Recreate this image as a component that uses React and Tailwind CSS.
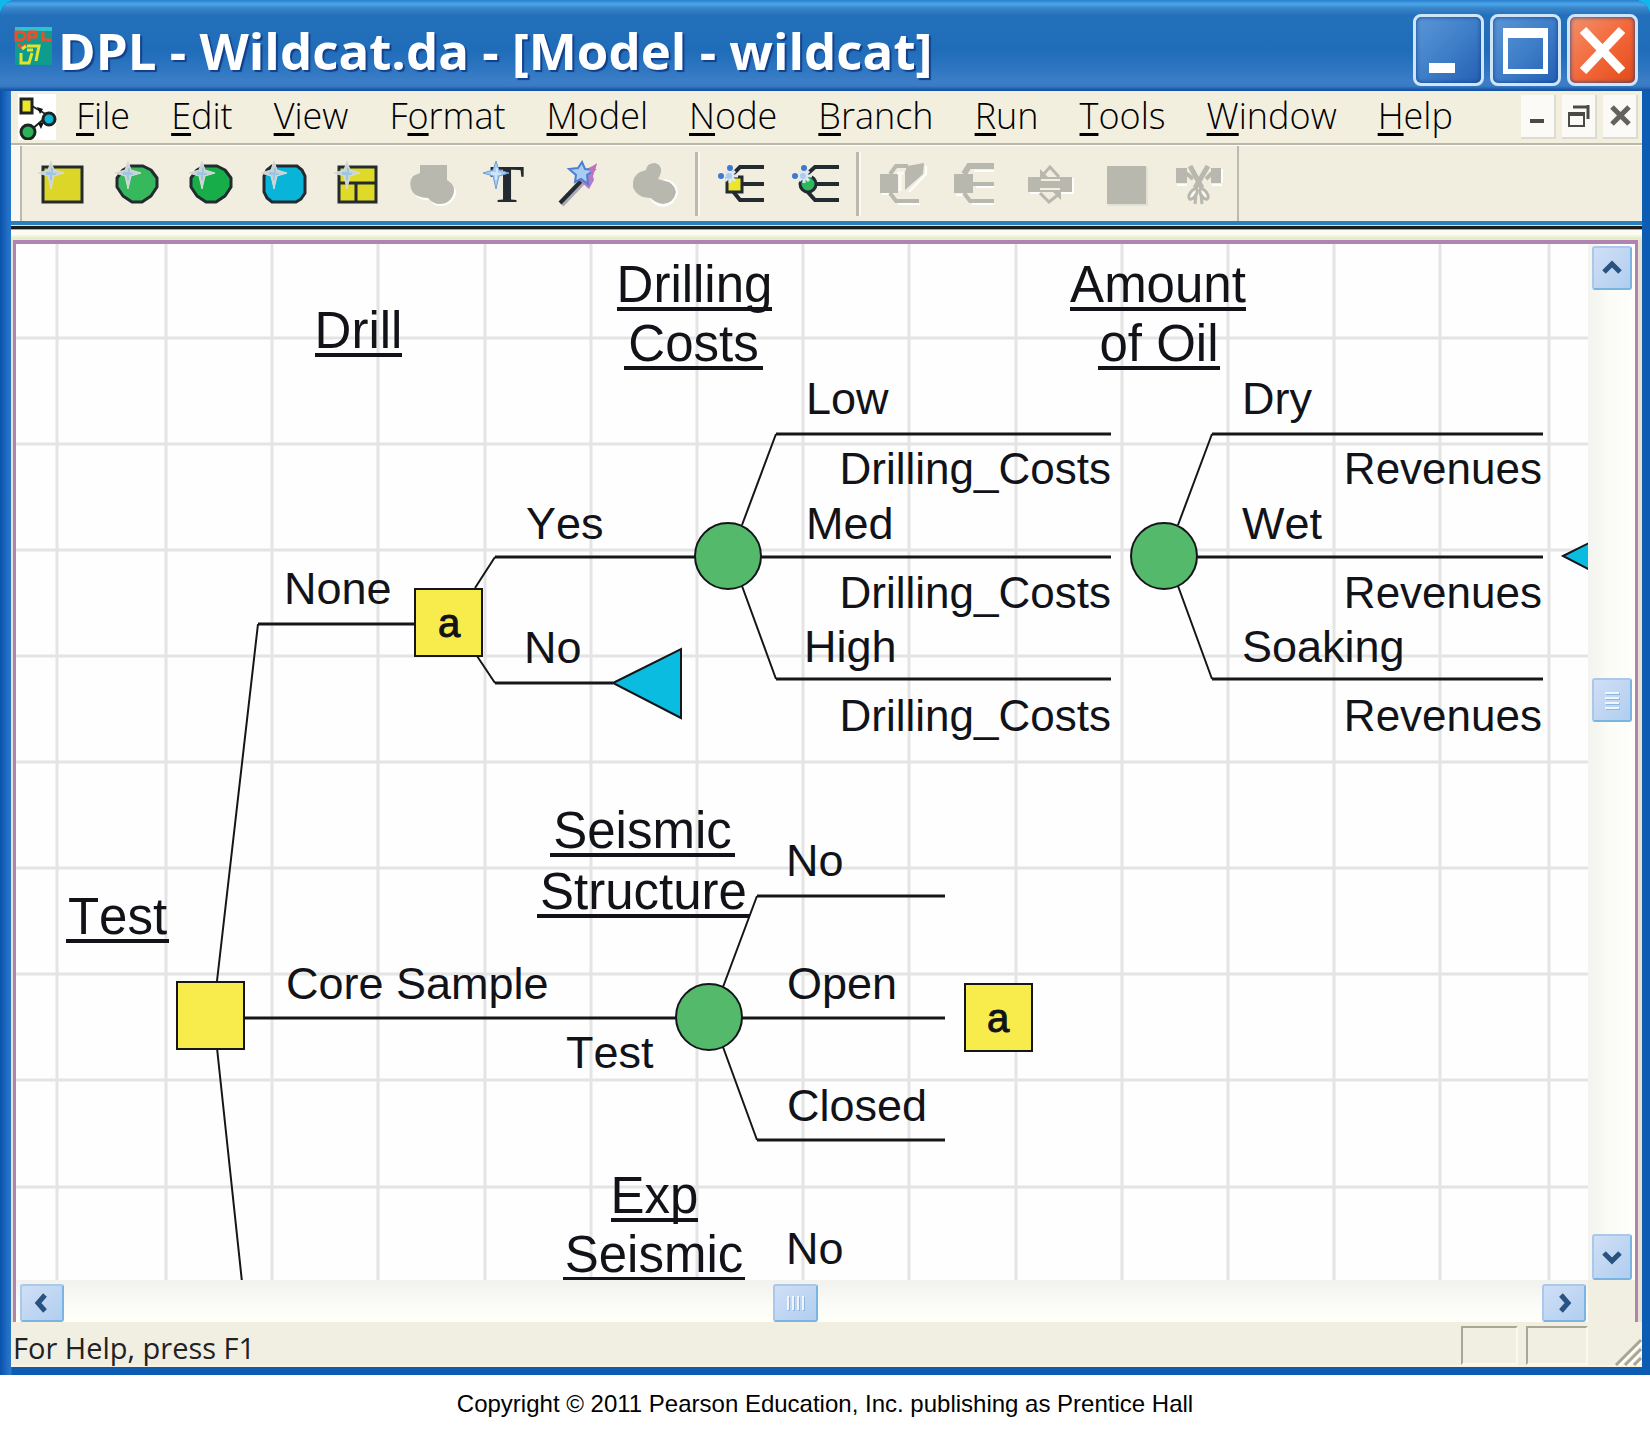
import React from "react";

const UI = "font-['Open_Sans','Noto_Sans',sans-serif]";
const ARIAL = "font-['Liberation_Sans',Arial,sans-serif]";

/* ---------- title bar ---------- */

function AppIcon() {
  return (
    <svg width="40" height="40" viewBox="0 0 40 40" aria-hidden="true" className="shrink-0">
      <rect x="1" y="1" width="37" height="38" fill="#0f9c8e" />
      <rect x="1" y="1" width="37" height="4" fill="#2cc4c8" />
      <g fill="none" stroke="#e8502c" strokeWidth="3">
        <path d="M2 6h6l3 2v4l-3 2H2z M15 15V6h7v5h-7 M29 5v9h8" />
        <path d="M4 18l4 4 4-4" />
      </g>
      <g fill="none" stroke="#e3e32c" strokeWidth="3">
        <path d="M13 20h12l-3 15 M12 20l-4 3 M7 27v10h8l3-10 M13 24h6" />
      </g>
    </svg>
  );
}

function CaptionButton({ label, close, children }) {
  const tone = close
    ? "bg-linear-to-br from-[#f0906a] via-[#f4683a] to-[#e04a18]"
    : "bg-linear-to-br from-[#5b96d6] via-[#3f7ec8] to-[#2460b4]";
  return (
    <button
      type="button"
      aria-label={label}
      className={"h-[72px] w-[71px] rounded-lg border-[3px] border-[#cfe6fa] shadow-[inset_0_0_4px_#123f8a] " + tone}
    >
      <svg width="65" height="66" viewBox="0 0 65 66" aria-hidden="true">
        {children}
      </svg>
    </button>
  );
}

function TitleBar() {
  return (
    <header className="flex h-[91px] shrink-0 items-center gap-1 bg-[linear-gradient(180deg,#2a80cc_0px,#4aa6ea_4px,#3a86ca_8px,#2470bb_15px,#1f6cb8_50px,#2b74c0_66px,#3b7dc6_80px,#3a7cc4_86px,#1554a6_90px)] pr-3 pl-[14px]">
      <AppIcon />
      <h1 className={"min-w-0 flex-1 truncate pt-2 text-[51px] leading-[72px] font-bold text-white [text-shadow:2px_2px_1px_#123f8a] " + UI}>
        DPL - Wildcat.da - [Model - wildcat]
      </h1>
      <div className="flex gap-[6px] pt-2">
        <CaptionButton label="Minimize">
          <rect x="13" y="46" width="26" height="10" fill="#fff" />
        </CaptionButton>
        <CaptionButton label="Maximize">
          <path fillRule="evenodd" fill="#fff" d="M10 11h45v46H10z M15 21v31h35V21z" />
        </CaptionButton>
        <CaptionButton label="Close" close>
          <path d="M13 13l39 41M52 13L13 54" stroke="#fff" strokeWidth="9" />
        </CaptionButton>
      </div>
    </header>
  );
}

/* ---------- menu bar ---------- */

const MENUS = [
  ["", "F", "ile"],
  ["", "E", "dit"],
  ["", "V", "iew"],
  ["F", "o", "rmat"],
  ["", "M", "odel"],
  ["", "N", "ode"],
  ["", "B", "ranch"],
  ["", "R", "un"],
  ["", "T", "ools"],
  ["", "W", "indow"],
  ["", "H", "elp"],
];

function MdiButton({ label, children }) {
  return (
    <button type="button" aria-label={label} className="h-11 w-[35px] border-r-2 border-b-2 border-[#dedbd0] bg-[#fbfaf6]">
      <svg width="33" height="42" viewBox="0 0 33 42" aria-hidden="true" fill="none" stroke="#4a4a46">
        {children}
      </svg>
    </button>
  );
}

function MenuBar() {
  return (
    <div className="flex h-[52px] shrink-0 items-center bg-[#f2efdf] pr-1 pl-[7px]">
      <svg width="40" height="46" viewBox="0 0 40 46" aria-hidden="true" className="shrink-0">
        <rect width="38" height="46" fill="#fff" />
        <path d="M14 12l17 10M12 37l16-14" stroke="#1c2420" strokeWidth="2" />
        <path d="M19 13l6 2-3 5zM20 29l6-1-3 7z" fill="#111" />
        <rect x="3" y="5" width="11" height="14" fill="#ece52c" stroke="#1c2420" strokeWidth="3" />
        <circle cx="31" cy="25" r="6" fill="#12b4dc" stroke="#1c2420" strokeWidth="3" />
        <circle cx="10" cy="38" r="7" fill="#2cb35a" stroke="#1c2420" strokeWidth="3" />
      </svg>
      <nav aria-label="Main menu" className="flex min-w-0 flex-1 gap-[41px] pl-[18px]">
        {MENUS.map(([before, key, after]) => (
          <button
            key={before + key + after}
            type="button"
            className={"pb-[2px] text-[36px] leading-[44px] font-light whitespace-nowrap text-black " + UI}
          >
            {before}
            <span className="underline decoration-3 underline-offset-[4px] [text-decoration-skip-ink:none]">{key}</span>
            {after}
          </button>
        ))}
      </nav>
      <div className="flex gap-[6px]">
        <MdiButton label="Minimize document">
          <path d="M9 26h14" strokeWidth="4" />
        </MdiButton>
        <MdiButton label="Restore document">
          <path d="M7 20h15v11H7z" strokeWidth="2" />
          <path d="M6 19h17" strokeWidth="4" />
          <path d="M11 12h16M26 10v14" strokeWidth="3" />
        </MdiButton>
        <MdiButton label="Close document">
          <path d="M9 12l17 17M26 12L9 29" strokeWidth="5" stroke="#62625e" />
        </MdiButton>
      </div>
    </div>
  );
}

/* ---------- toolbar ---------- */

const INK = "#232a30";
const GREY = "#b9b8ae";

function Sparkle({ x = 14, y = 13, blue }) {
  return (
    <g transform={`translate(${x} ${y})`}>
      <path
        d="M0-12L3-3L13 0L3 3L0 16L-3 3L-13 0L-3-3Z"
        fill={blue ? "#a9cdf0" : "#c9d2d8"}
        stroke={blue ? "#6f9edb" : "#d9dcd6"}
        strokeWidth="1"
      />
      <path d="M-5-1h5v-4h2v5h3v2h-4v5h-2v-5h-4z" fill={blue ? "#cfe6fa" : "#9cc7e2"} />
    </g>
  );
}

function BlueDots() {
  return (
    <g>
      <path d="M13 9v14M6 16h15M8 11l10 10M18 11L8 21" stroke="#dfe7ef" strokeWidth="3" />
      <circle cx="13" cy="8" r="3" fill="#3f78cc" />
      <circle cx="4" cy="16" r="3" fill="#3f78cc" />
      <circle cx="12" cy="16" r="3" fill="#a9cdf0" />
    </g>
  );
}

const ICONS = {
  "New decision node": (
    <>
      <rect x="5" y="7" width="39" height="35" fill="#dcd628" stroke={INK} strokeWidth="3" />
      <Sparkle x={13} />
    </>
  ),
  "New chance node": (
    <>
      <path d="M18 6h13l8 4 6 8v9l-6 9-9 6H20l-9-6-6-9v-9l6-8z" fill="#36b85c" stroke={INK} strokeWidth="3" strokeLinejoin="round" />
      <Sparkle x={16} />
    </>
  ),
  "New controlled node": (
    <>
      <path d="M18 6h13l8 4 6 8v9l-6 9-9 6H20l-9-6-6-9v-9l6-8z" fill="#17ae4a" stroke={INK} strokeWidth="3" strokeLinejoin="round" />
      <Sparkle x={16} />
    </>
  ),
  "New value node": (
    <>
      <path d="M12 6h25l5 4 3 6v17l-4 6-5 3H12l-5-4-3-6V16l3-6z" fill="#08b4d8" stroke={INK} strokeWidth="3" />
      <Sparkle x={14} />
    </>
  ),
  "New strategy table": (
    <>
      <rect x="5" y="7" width="37" height="35" fill="#dfda28" stroke={INK} strokeWidth="3" />
      <path d="M5 23h37M22 23v19" stroke={INK} strokeWidth="3" />
      <Sparkle x={13} />
    </>
  ),
  "Combine nodes": (
    <>
      <path d="M42 24q7 4 6 10-4 12-16 12-6 0-10-6-10 1-15-5z" fill="#fff" />
      <path d="M12 5h27v15q8 5 7 12-3 12-14 12-7 0-12-6-12 0-16-7-4-8 1-15l7-3z" fill={GREY} />
    </>
  ),
  "New text": (
    <>
      <text x="25" y="42" textAnchor="middle" fill={INK} className="font-['Liberation_Serif',serif] text-[52px] font-bold">
        T
      </text>
      <Sparkle x={14} y={13} blue />
    </>
  ),
  "Wizard": (
    <>
      <path d="M6 45L28 22" stroke="#a9a8b4" strokeWidth="4" />
      <path d="M4 43L27 19" stroke={INK} strokeWidth="4" />
      <path d="M28 10l13-6-4 12 1 4-5 9-10-9z" fill="#b57ac8" />
      <path d="M26 2l3 7 9 1-7 5 1 9-7-5-6 3 1-7-7-6 9-1z" fill="#a9cdf0" stroke="#4d7fd0" strokeWidth="2" />
      <path d="M33 9l8-6-4 12z" fill="#c474b4" />
    </>
  ),
  "Group nodes": (
    <>
      <path d="M35 19q12 2 13 14-3 12-14 14-8 0-13-7z" fill="#fff" />
      <path d="M16 10q1-7 9-7 7 2 6 9-1 4-3 7 6 2 11 3 6 4 7 10-2 11-13 12-8-1-12-6-14 0-18-11-1-11 7-15z" fill={GREY} />
    </>
  ),
  "Add decision branches": (
    <>
      <path d="M15 15L23 7h24M20 24h27M15 30l8 10h24" fill="none" stroke={INK} strokeWidth="4" />
      <rect x="10" y="17" width="15" height="15" fill="#ece52c" stroke={INK} strokeWidth="3" />
      <BlueDots />
    </>
  ),
  "Add chance branches": (
    <>
      <path d="M15 15L24 7h24M20 24h28M15 30l9 10h24" fill="none" stroke={INK} strokeWidth="4" />
      <circle cx="17" cy="24" r="8" fill="#2cb85c" stroke={INK} strokeWidth="3" />
      <BlueDots />
    </>
  ),
  "Edit branch": (
    <>
      <path d="M4 34h7M20 44h22M48 6v8L31 32" fill="none" stroke="#fff" strokeWidth="2" />
      <rect x="2" y="14" width="18" height="19" fill={GREY} />
      <path d="M12 14l6-8h12M12 33l6 8h23" fill="none" stroke={GREY} strokeWidth="4" />
      <path d="M29 6l17-3-1 11-18 16V12z" fill={GREY} />
      <path d="M19 13h7M22 13v18" stroke="#fbfaf4" strokeWidth="3" />
    </>
  ),
  "Move branch": (
    <>
      <path d="M4 35h7M22 11h20M24 27h18M20 44h22" fill="none" stroke="#fff" strokeWidth="2" />
      <rect x="2" y="14" width="19" height="19" fill={GREY} />
      <path d="M12 14l5-8h25" fill="none" stroke={GREY} strokeWidth="6" />
      <path d="M12 33l6 8h24M20 24h22" fill="none" stroke={GREY} strokeWidth="4" />
    </>
  ),
  "Swap nodes": (
    <>
      <path d="M4 33h11M35 33h12V18" fill="none" stroke="#fff" strokeWidth="2" />
      <rect x="2" y="17" width="44" height="15" fill={GREY} />
      <path d="M15 20h19M14 29h20" stroke="#f2efdf" strokeWidth="2" />
      <path d="M14 9v9h9zM35 40v-9h-9z" fill={GREY} />
      <path d="M16 16l8-9 9 10M14 33l9 9 10-8" fill="none" stroke={GREY} strokeWidth="3" />
    </>
  ),
  "Block": (
    <>
      <rect x="8" y="7" width="40" height="39" fill="#e2e1d8" />
      <rect x="7" y="6" width="39" height="38" fill={GREY} />
    </>
  ),
  "Cut": (
    <>
      <path d="M3 25h10M38 25h10M48 9v14" fill="none" stroke="#fff" strokeWidth="2" />
      <rect x="2" y="8" width="11" height="15" fill={GREY} />
      <rect x="37" y="8" width="10" height="15" fill={GREY} />
      <path d="M12 13l7 6M38 13l-6 6" stroke={GREY} strokeWidth="4" />
      <path d="M16 6l12 22M34 6L21 28" stroke={GREY} strokeWidth="5" />
      <ellipse cx="19" cy="34" rx="3" ry="6" transform="rotate(35 19 34)" fill="#fbfaf4" stroke={GREY} strokeWidth="3" />
      <ellipse cx="30" cy="34" rx="3" ry="6" transform="rotate(-35 30 34)" fill="#fbfaf4" stroke={GREY} strokeWidth="3" />
      <path d="M22 34l-1 10M27 34l1 10" stroke={GREY} strokeWidth="3" />
    </>
  ),
};

const GROUPS = [
  ["New decision node", "New chance node", "New controlled node", "New value node", "New strategy table", "Combine nodes", "New text", "Wizard", "Group nodes"],
  ["Add decision branches", "Add chance branches"],
  ["Edit branch", "Move branch", "Swap nodes", "Block", "Cut"],
];

function Toolbar() {
  return (
    <div role="toolbar" aria-label="Model tools" className="flex h-[75px] shrink-0 items-stretch overflow-hidden bg-[#f1eee0]">
      <div className="mr-[3px] w-[11px] shrink-0 border-r-2 border-[#bdb9ae] bg-[#faf8f2]" />
      {GROUPS.map((group, i) => (
        <div key={group[0]} className="flex items-center">
          {group.map((name) => (
            <button key={name} type="button" aria-label={name} className="flex w-[74px] justify-center">
              <svg width="48" height="48" viewBox="0 0 48 48" aria-hidden="true" className="overflow-visible">
                {ICONS[name]}
              </svg>
            </button>
          ))}
          <div className={i < 2 ? "mr-1 ml-[4px] h-16 w-[5px] border-r-2 border-l-[3px] border-l-[#bdb9ae] border-r-[#faf8f2]" : "h-full w-1 border-r-2 border-[#bdb9ae]"} />
        </div>
      ))}
    </div>
  );
}

/* ---------- decision tree ---------- */

const GRID_X = [57, 166, 272, 378, 485, 591, 697, 803, 909, 1016, 1122, 1228, 1334, 1440, 1549];
const GRID_Y = [338, 444, 550, 656, 762, 868, 974, 1080, 1187];

/* text, underline start, underline end, baseline */
const HEADINGS = [
  ["Drill", 315, 402, 348],
  ["Drilling", 617, 772, 302],
  ["Costs", 624, 763, 361],
  ["Amount", 1070, 1246, 302],
  ["of Oil", 1098, 1220, 361],
  ["Test", 66, 169, 934],
  ["Seismic", 550, 735, 848],
  ["Structure", 537, 750, 909],
  ["Exp", 611, 698, 1213],
  ["Seismic", 563, 745, 1272],
];

const LABELS = [
  ["None", 284, 604],
  ["Yes", 526, 539],
  ["No", 524, 663],
  ["Low", 806, 414],
  ["Med", 806, 539],
  ["High", 804, 662],
  ["Dry", 1242, 414],
  ["Wet", 1242, 539],
  ["Soaking", 1242, 662],
  ["Core Sample", 286, 999],
  ["Test", 566, 1068],
  ["No", 786, 876],
  ["Open", 787, 999],
  ["Closed", 787, 1121],
  ["No", 786, 1264],
];

const VALUES = [
  ["Drilling_Costs", 1111, 484],
  ["Drilling_Costs", 1111, 608],
  ["Drilling_Costs", 1111, 731],
  ["Revenues", 1542, 484],
  ["Revenues", 1542, 608],
  ["Revenues", 1542, 731],
];

function DecisionTree() {
  return (
    <svg role="img" aria-label="Wildcat decision tree" className={"absolute inset-0 h-full w-full [font-kerning:none] " + ARIAL}>
      <g transform="translate(-16 -244)">
        <g stroke="#e4e4e4" strokeWidth="3">
          {GRID_X.map((x) => (
            <line key={x} x1={x} x2={x} y1="244" y2="2000" />
          ))}
          {GRID_Y.map((y) => (
            <line key={y} x1="16" x2="3000" y1={y} y2={y} />
          ))}
        </g>
        <g fill="none" stroke="#14161a" strokeWidth="3" strokeLinejoin="round">
          <path d="M258 624H415M495 557H695M495 683H613" />
          <path d="M776 434H1111M760 557H1111M776 679H1111" />
          <path d="M1212 434H1543M1196 557H1543M1212 679H1543" />
          <path d="M244 1018H676M742 1018H945M757 896H945M757 1140H945" />
        </g>
        <g fill="none" stroke="#14161a" strokeWidth="2">
          <path d="M217 981L258 624M217 1048L242 1282" />
          <path d="M475 588L495 557M477 656L495 683" />
          <path d="M742 525L776 434M742 586L776 679" />
          <path d="M1178 525L1212 434M1178 586L1212 679" />
          <path d="M723 987L757 896M723 1047L757 1140" />
        </g>
        <g stroke="#14161a" strokeWidth="2">
          <g fill="#f7ec4c">
            <rect x="415" y="589" width="67" height="67" />
            <rect x="177" y="982" width="67" height="67" />
            <rect x="965" y="984" width="67" height="67" />
          </g>
          <g fill="#54b96a">
            <circle cx="728" cy="556" r="33" />
            <circle cx="1164" cy="556" r="33" />
            <circle cx="709" cy="1017" r="33" />
          </g>
          <g fill="#0abce0">
            <path d="M613 683L681 649V718z" />
            <path d="M1563 556L1631 522V591z" />
          </g>
        </g>
        <g fill="#111318">
          {HEADINGS.map(([text, x1, x2, y]) => (
            <g key={text + x1}>
              <text x={(x1 + x2) / 2} y={y} textAnchor="middle" className="text-[51px]">
                {text}
              </text>
              <rect x={x1} y={y + 5} width={x2 - x1} height="4" />
            </g>
          ))}
          <g className="text-[45px]">
            {LABELS.map(([text, x, y]) => (
              <text key={text + y} x={x} y={y}>
                {text}
              </text>
            ))}
          </g>
          <g className="text-[44px]">
            {VALUES.map(([text, x, y]) => (
              <text key={text + y} x={x} y={y} textAnchor="end">
                {text}
              </text>
            ))}
          </g>
          <g className="text-[40px]" textAnchor="middle" stroke="#111318">
            <text x="449" y="637">a</text>
            <text x="998" y="1032">a</text>
          </g>
        </g>
      </g>
    </svg>
  );
}

/* ---------- scroll bars ---------- */

function ScrollButton({ label, size, d, thin }) {
  return (
    <button
      type="button"
      aria-label={label}
      className={"flex shrink-0 items-center justify-center rounded-[3px] border-2 border-[#a9c8ea] border-r-[#79b4e2] border-b-[#79b4e2] bg-linear-to-br from-[#d0dff5] to-[#b0cef0] " + size}
    >
      <svg width="24" height="24" viewBox="0 0 24 24" fill="none" aria-hidden="true">
        {thin && <path d={d} transform="translate(1 1)" stroke="#8db6e2" strokeWidth="2" />}
        <path d={d} stroke={thin ? "#eef5fd" : "#28527f"} strokeWidth={thin ? 2 : 5} />
      </svg>
    </button>
  );
}

function VerticalScroll() {
  return (
    <div className="flex w-[47px] shrink-0 flex-col items-center bg-[linear-gradient(90deg,#f3f3ef,#fbfcf6_45%,#fefefb)] pt-[2px]">
      <ScrollButton label="Scroll up" size="h-[44px] w-10" d="M4 16l8-8 8 8" />
      <div className="flex-[387]" />
      <ScrollButton label="Vertical scroll thumb" size="h-[44px] w-10" d="M5 5h14M5 10h14M5 15h14M5 20h14" thin />
      <div className="flex-[510]" />
      <ScrollButton label="Scroll down" size="h-[46px] w-10" d="M4 8l8 8 8-8" />
    </div>
  );
}

function HorizontalScroll() {
  return (
    <div className="flex min-w-0 flex-1 items-stretch bg-[linear-gradient(180deg,#f1f1ee,#fbfbf8_60%,#fefefa)] pt-1 pr-[2px] pl-1">
      <ScrollButton label="Scroll left" size="w-11" d="M15 4l-7 8 7 8" />
      <div className="flex-[708]" />
      <ScrollButton label="Horizontal scroll thumb" size="w-[45px]" d="M5 5v14M10 5v14M15 5v14M20 5v14" thin />
      <div className="flex-[724]" />
      <ScrollButton label="Scroll right" size="w-11" d="M9 4l7 8-7 8" />
    </div>
  );
}

/* ---------- status bar ---------- */

function StatusBar() {
  return (
    <footer className="flex h-[45px] shrink-0 items-stretch border-t-2 border-b-2 border-t-[#f3efdc] border-b-[#fdf3dc] bg-[#f1eee2] pl-[2px]">
      <p className={"flex-1 pt-[5px] text-[29px] leading-[38px] text-[#222] " + UI}>For Help, press F1</p>
      <div className="mt-[2px] mr-2 w-[57px] border-2 border-t-[#aaa696] border-r-[#fbf9f0] border-b-[#fbf9f0] border-l-[#aaa696]" />
      <div className="mt-[2px] w-[62px] border-2 border-t-[#aaa696] border-r-[#fbf9f0] border-b-[#fbf9f0] border-l-[#aaa696]" />
      <svg width="54" height="42" viewBox="0 0 54 42" aria-hidden="true">
        <path d="M28 41L53 16M37 41L53 25M46 41l7-7" stroke="#a9a595" strokeWidth="3" />
        <path d="M31 42L54 19M40 42L54 28M49 42l5-5" stroke="#fff" strokeWidth="2" />
      </svg>
    </footer>
  );
}

export default function App() {
  return (
    <div className="flex h-screen min-h-[700px] flex-col bg-white">
      <div className="min-h-0 flex-1 bg-[#12b8ec]">
        <div className="flex h-full flex-col overflow-hidden rounded-t-2xl bg-[#0a58ae]">
          <TitleBar />
          <div className="flex min-h-0 flex-1 flex-col bg-[linear-gradient(90deg,#0a52a8_0px,#1c68c0_6px,#2b78c8_11px,#0b5cb2_12px)] pr-2 pb-2 pl-[11px]">
            <MenuBar />
            <div className="h-[3px] shrink-0 border-b border-white bg-[#b9b6b0]" />
            <Toolbar />
            <div className="h-4 shrink-0 bg-[linear-gradient(180deg,#2a7fbf_0_4px,#e8e2cc_4px_5px,#1c1c16_5px_8px,#a8a698_8px_9px,#fdfcf4_9px_14px,#f1f6dc_14px)]" />
            <div className="h-[3px] shrink-0 bg-[#e3efc6]" />
            <div className="flex min-h-0 flex-1 flex-col bg-[#e6e3d0] pr-1 pl-[2px]">
              <main className="flex min-h-0 flex-1 flex-col border-t-4 border-r-3 border-l-3 border-[#b283b2]">
                <div className="flex min-h-0 flex-1">
                  <div className="relative min-w-0 flex-1 overflow-hidden bg-[#fefefe]">
                    <DecisionTree />
                  </div>
                  <VerticalScroll />
                </div>
                <div className="flex h-[42px] shrink-0">
                  <HorizontalScroll />
                  <div className="w-[47px] bg-[#f1eee2]" />
                </div>
              </main>
            </div>
            <StatusBar />
          </div>
        </div>
      </div>
      <p className={"h-[63px] shrink-0 pt-[13px] text-center text-[24px] leading-8 text-black " + ARIAL}>
        Copyright © 2011 Pearson Education, Inc. publishing as Prentice Hall
      </p>
    </div>
  );
}
